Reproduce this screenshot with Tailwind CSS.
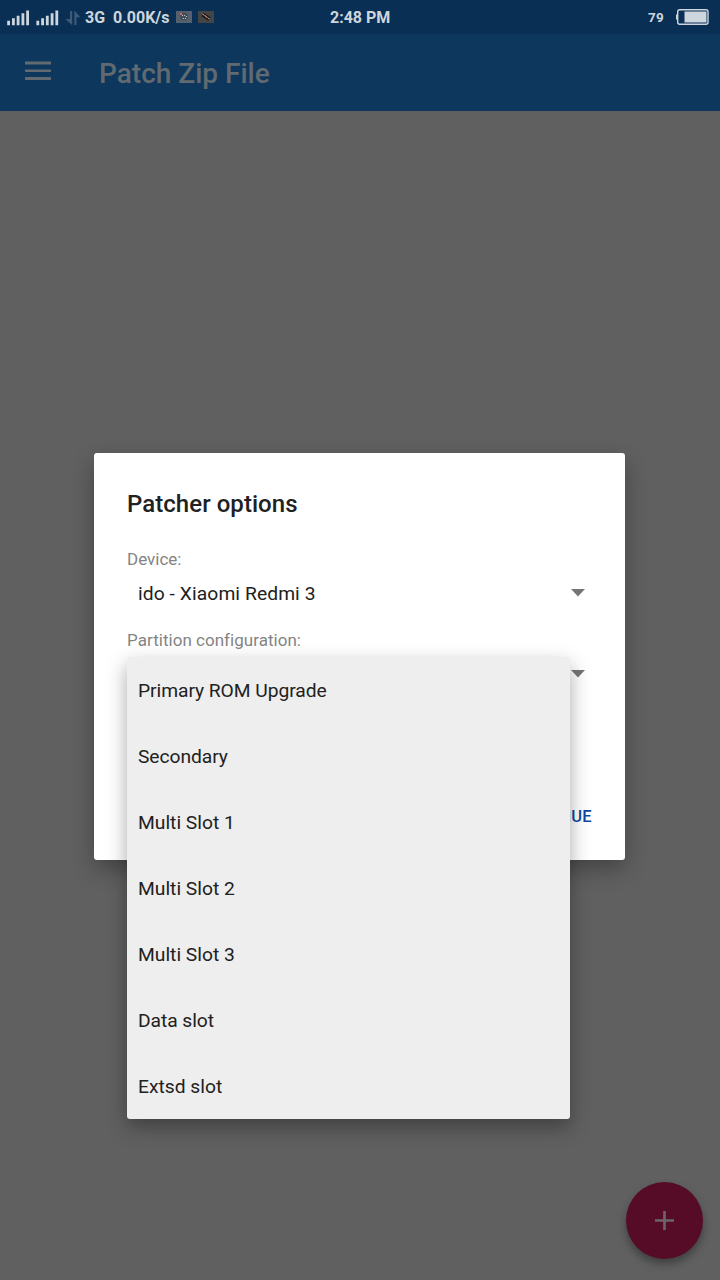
<!DOCTYPE html>
<html lang="en">
<head>
<meta charset="utf-8">
<title>Patch Zip File</title>
<script src="https://cdn.jsdelivr.net/npm/@tailwindcss/browser@4"></script>
</head>
<body class="relative flex h-[1280px] w-[720px] flex-col overflow-hidden bg-[#606060] font-['Roboto',sans-serif]">
  <!-- Status bar -->
  <header class="flex h-[34px] shrink-0 items-center bg-[#0a2f55] text-[16px] font-bold text-[#ced6dd]">
    <div class="flex w-[330px] items-center whitespace-nowrap pl-[7px]">
      <svg class="h-[34px] w-[73px] shrink-0" viewBox="7 0 73 34">
        <g id="signal" fill="#ced6dd">
          <path d="M7.200 20.700h2.800v4.600H7.200zM12 18.200h2.800v7.100H12zM16.700 15.800h2.800v9.500h-2.800zM21.500 13.200h2.800v12.100h-2.800zM26.200 10.400H29v14.900h-2.800z"/>
        </g>
        <use href="#signal" x="29.200"/>
        <g fill="#3d5b79"><path d="M70 11h2.200v14.300L65.500 19H70zM74.300 25V10.500l6.200 6.800h-4V25z"/></g>
      </svg>
      <span class="ml-[5px] w-[28px] pt-[2px]">3G</span>
      <span class="w-[63px] pt-[2px]">0.00K/s</span>
      <svg class="h-[34px] w-[40px] shrink-0" viewBox="176 0 40 34">
        <path fill="#54606d" d="M176 11h16v12h-16z"/><circle cx="184" cy="16.500" r="4" fill="#434e58"/>
        <path fill="#d9645c" d="M180 13h2v2h-2z"/><path fill="#c0c8ce" d="M182 15h1v1h-1zM184 15h1v1h-1zM186 16h1v1h-1zM185 18h1v1h-1zM183 18h1v1h-1z"/>
        <path fill="#454545" d="M198 11h16v12h-16z"/><path d="M202.500 14.500l7 4.500" stroke="#1b1b1b" stroke-width="4"/>
        <path d="M202.500 14l7 5" stroke="#c4bebd" stroke-width="1"/><path fill="#c0504a" d="M204 15h2v1h-2zM206 17h2v1h-2z"/>
      </svg>
    </div>
    <span class="w-[318px] pt-[2px]">2:48 PM</span>
    <span class="w-[28px] text-[13.500px] tracking-[.2px]">79</span>
    <svg class="h-[34px] w-[34px]" viewBox="676 0 34 34">
      <path fill="#ced6dd" d="M676 14.500h2v5h-2z"/><rect x="677.700" y="9.700" width="30.300" height="14.500" rx="2" fill="none" stroke="#ced6dd" stroke-width="1.400"/>
      <path fill="#ced6dd" d="M684.500 11.500h22v11h-22z"/>
    </svg>
  </header>
  <!-- App bar -->
  <div class="flex h-[77px] shrink-0 items-center bg-[#0d375d] pl-[25px] text-[#606a70]">
    <svg class="mb-[3px] h-[20px] w-[26px]" viewBox="0 0 26 20" fill="currentColor"><path d="M0 .5h26v3H0zM0 8.500h26v2.500H0zM0 16h26v3H0z"/></svg>
    <h1 class="ml-[48px] pt-[2px] text-[28px] font-medium leading-8">Patch Zip File</h1>
  </div>
  <!-- Floating action button -->
  <button class="absolute top-[1182px] left-[626px] flex size-[77px] items-center justify-center rounded-full bg-[#560c26] shadow-[0_5px_9px_rgba(0,0,0,.35)]" aria-label="Add">
    <svg class="size-[19px]" viewBox="0 0 19 19" stroke="#6c6467" stroke-width="2.700"><path d="M0 9.500h19M9.500 0v19"/></svg>
  </button>
  <!-- Dialog -->
  <main class="absolute top-[453px] left-[94px] h-[407px] w-[531px] rounded-[3px] bg-white px-[33px] pt-[35px] text-[#212121] shadow-[0_9px_22px_rgba(0,0,0,.3)]">
    <h2 class="text-[24px] font-medium leading-8 tracking-[.05px]">Patcher options</h2>
    <p class="mt-[28px] text-[17px] leading-[22px] text-[#848484]">Device:</p>
    <div class="flex h-[49px] items-center justify-between pr-[7px] pl-[11px] text-[19.250px]">
      <span class="tracking-[.08px]">ido - Xiaomi Redmi 3</span>
      <svg class="mb-[4px] h-[8px] w-[14px]" viewBox="0 0 14 8"><path fill="#757575" d="M0 0h14L7 7.500z"/></svg>
    </div>
    <p class="mt-[10px] text-[17px] leading-[22px] tracking-[.03px] text-[#848484]">Partition configuration:</p>
    <div class="flex h-[49px] items-center justify-end pr-[7px]">
      <svg class="mb-[4px] h-[8px] w-[14px]" viewBox="0 0 14 8"><path fill="#757575" d="M0 0h14L7 7.500z"/></svg>
    </div>
    <div class="mt-[106px] flex justify-end text-[16.500px] font-medium leading-[22px] tracking-[.3px] text-[#0d47a1]">CONTINUE</div>
    <!-- Dropdown menu -->
    <ul class="absolute top-[204px] left-[33px] w-[443px] rounded-[3px] bg-[#eeeeee] pl-[11px] text-[19.250px] tracking-[-.06px] shadow-[0_8px_20px_rgba(0,0,0,.34)]">
      <li class="flex h-[66px] items-center pt-[2px]">Primary ROM Upgrade</li>
      <li class="flex h-[66px] items-center pt-[2px]">Secondary</li>
      <li class="flex h-[66px] items-center pt-[2px] tracking-normal">Multi Slot 1</li>
      <li class="flex h-[66px] items-center pt-[2px] tracking-normal">Multi Slot 2</li>
      <li class="flex h-[66px] items-center pt-[2px] tracking-normal">Multi Slot 3</li>
      <li class="flex h-[66px] items-center pt-[2px]">Data slot</li>
      <li class="flex h-[66px] items-center pt-[2px] tracking-normal">Extsd slot</li>
    </ul>
  </main>
</body>
</html>
